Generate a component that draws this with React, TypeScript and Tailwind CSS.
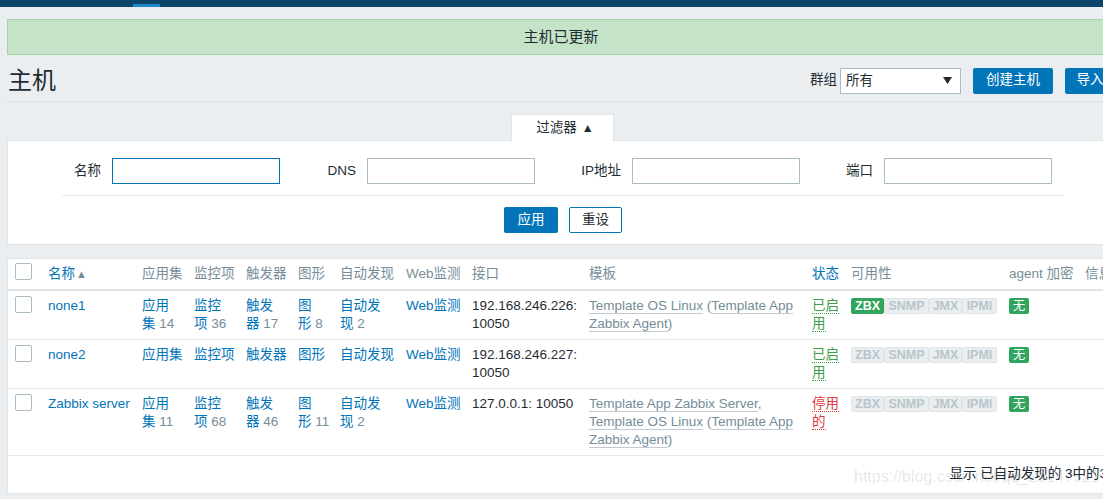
import React from "react";

const FONT = { fontFamily: '"Liberation Sans", Arial, "Noto Sans CJK SC", sans-serif' };

function Checkbox() {
  return <div className="w-[17px] h-[17px] bg-white border border-[#acbbc2] rounded-[2px]" />;
}

function Badge({ label, w, on }: { label: string; w: string; on?: boolean }) {
  return (
    <span
      className={
        "inline-flex items-center justify-center h-[16px] text-[12.5px] leading-none font-bold rounded-[2px] border " +
        w +
        (on
          ? " bg-[#31a55d] border-[#31a55d] text-white"
          : " bg-[#ebeef0] border-[#dfe4e7] text-[#b9c5cb]")
      }
    >
      {label}
    </span>
  );
}

function Avail({ zbx }: { zbx?: boolean }) {
  return (
    <div className="flex mt-[1px]">
      <Badge label="ZBX" w="w-[33px]" on={zbx} />
      <Badge label="SNMP" w="w-[45px]" />
      <Badge label="JMX" w="w-[33px]" />
      <Badge label="IPMI" w="w-[35px]" />
    </div>
  );
}

function None() {
  return (
    <span className="inline-flex items-center justify-center w-[20px] h-[16px] mt-[1px] bg-[#31a55d] text-white text-[12.5px] rounded-[2px] leading-none">
      无
    </span>
  );
}

const L = "text-[#0275b8]";
const G = "text-[#768d99]";
const T = "text-[#768d99] border-b border-[#c1cbd1]";

function Two({ a, b, n }: { a: string; b: string; n?: string }) {
  return (
    <div className="whitespace-nowrap">
      <span className={L}>{a}</span>
      <br />
      <span className={L}>{b}</span>
      {n !== undefined && <span className={G}> {n}</span>}
    </div>
  );
}

const td = "align-top px-[6px] py-[6px] leading-[18px]";
const th = "align-top px-[6px] py-[6px] leading-[18px] font-normal text-left";

export default function App() {
  return (
    <div
      className="w-[1103px] h-[499px] overflow-hidden bg-[#ebeef0] relative text-[13.5px] text-[#1f2c33]"
      style={FONT}
    >
      <div className="h-[7px] bg-[#0a466a] flex items-end pl-[133px]">
        <div className="w-[27px] h-[3px] bg-[#1c87c9]" />
      </div>
      <div className="w-[1122px] px-[7px] pt-[12px]">
        {/* message */}
        <div className="h-[36px] bg-[#c5e3c7] border border-[#a6d4a8] flex items-center justify-center text-[15px] text-[#1f2c33]">
          主机已更新
        </div>
        {/* header */}
        <div className="h-[47px] pt-[5px] border-b border-[#dde2e5] flex items-center justify-between">
          <h1 className="text-[24px] leading-none pl-[1px]">主机</h1>
          <div className="flex items-center">
            <span className="mr-[3px]">群组</span>
            <div className="w-[121px] h-[26px] bg-white border border-[#acbbc2] flex items-center justify-between pl-[5px] pr-[8px]">
              <span className="pt-[1px]">所有</span>
              <svg width="9" height="7" viewBox="0 0 9 7">
                <path d="M0 0 H9 L4.5 7 Z" fill="#1f2c33" />
              </svg>
            </div>
            <button className="ml-[12px] h-[26px] w-[80px] bg-[#0275b8] text-white rounded-[2px]">创建主机</button>
            <button className="ml-[12px] h-[26px] w-[50px] bg-[#0275b8] text-white rounded-[2px]">导入</button>
          </div>
        </div>
        {/* filter tab */}
        <div className="flex justify-center mt-[12px] -mb-[1px] relative">
          <div className="w-[103px] h-[27px] bg-white border border-b-0 border-[#dfe4e7] flex items-center justify-center ml-[2px] pl-[6px]">
            过滤器
            <span className="ml-[5px] text-[12px]">▲</span>
          </div>
        </div>
        {/* filter panel */}
        <div className="bg-white border border-[#dfe4e7] pt-[17px] pb-[11px]">
          <div className="flex items-center h-[26px]">
            <div className="w-[93px] text-right text-[#1f2c33]">名称</div>
            <div className="ml-[11px] w-[168px] h-[26px] border border-[#0275b8]" />
            <div className="w-[76px] text-right">DNS</div>
            <div className="ml-[11px] w-[168px] h-[26px] border border-[#acbbc2]" />
            <div className="w-[86px] text-right">IP地址</div>
            <div className="ml-[11px] w-[168px] h-[26px] border border-[#acbbc2]" />
            <div className="w-[73px] text-right">端口</div>
            <div className="ml-[11px] w-[168px] h-[26px] border border-[#acbbc2]" />
          </div>
          <div className="mt-[11px] ml-[54px] w-[1002px] h-[1px] bg-[#e6e9eb]" />
          <div className="mt-[11px] flex justify-center gap-[11px] pl-[4px]">
            <button className="h-[26px] w-[54px] bg-[#0275b8] text-white rounded-[2px]">应用</button>
            <button className="h-[26px] w-[53px] bg-white border border-[#0275b8] text-[#1f2c33] rounded-[2px]">重设</button>
          </div>
        </div>
        {/* table panel */}
        <div className="mt-[13px] bg-white border border-[#dfe4e7] relative">
          <table className="w-full table-fixed border-collapse">
            <colgroup>
              <col className="w-[34px]" />
              <col className="w-[94px]" />
              <col className="w-[52px]" />
              <col className="w-[52px]" />
              <col className="w-[52px]" />
              <col className="w-[42px]" />
              <col className="w-[66px]" />
              <col className="w-[66px]" />
              <col className="w-[117px]" />
              <col className="w-[223px]" />
              <col className="w-[39px]" />
              <col className="w-[158px]" />
              <col className="w-[76px]" />
              <col />
            </colgroup>
            <thead>
              <tr className="border-b-2 border-[#dfe4e7]">
                <th className="align-top pl-[7px] pt-[4px] pb-[8px]">
                  <Checkbox />
                </th>
                <th className={th + " whitespace-nowrap"}>
                  <span className={L}>名称</span>
                  <span className="text-[#768d99] text-[11px] ml-[1px]">▲</span>
                </th>
                <th className={th + " " + G + " whitespace-nowrap"}>应用集</th>
                <th className={th + " " + G + " whitespace-nowrap"}>监控项</th>
                <th className={th + " " + G + " whitespace-nowrap"}>触发器</th>
                <th className={th + " " + G + " whitespace-nowrap"}>图形</th>
                <th className={th + " " + G + " whitespace-nowrap"}>自动发现</th>
                <th className={th + " " + G + " whitespace-nowrap"}>Web监测</th>
                <th className={th + " " + G}>接口</th>
                <th className={th + " " + G}>模板</th>
                <th className={th + " " + L + " whitespace-nowrap"}>状态</th>
                <th className={th + " " + G}>可用性</th>
                <th className={th + " " + G + " whitespace-nowrap"}>agent 加密</th>
                <th className={th + " " + G + " whitespace-nowrap"}>信息</th>
              </tr>
            </thead>
            <tbody>
              <tr className="border-b border-[#e6e9eb]">
                <td className="align-top pl-[7px] pt-[5px]">
                  <Checkbox />
                </td>
                <td className={td + " " + L}>none1</td>
                <td className={td}><Two a="应用" b="集" n="14" /></td>
                <td className={td}><Two a="监控" b="项" n="36" /></td>
                <td className={td}><Two a="触发" b="器" n="17" /></td>
                <td className={td}><Two a="图" b="形" n="8" /></td>
                <td className={td}><Two a="自动发" b="现" n="2" /></td>
                <td className={td + " " + L + " whitespace-nowrap"}>Web监测</td>
                <td className={td + " whitespace-nowrap"}>192.168.246.226:<br />10050</td>
                <td className={td + " whitespace-nowrap " + G}>
                  <span className={T}>Template OS Linux</span> (<span className={T}>Template App<br />Zabbix Agent</span>)
                </td>
                <td className={td + " whitespace-nowrap"}>
                  <span className="text-[#3d9e47] border-b border-dotted border-[#3d9e47]">已启<br />用</span>
                </td>
                <td className={td}><Avail zbx /></td>
                <td className={td}><None /></td>
                <td className={td}></td>
              </tr>
              <tr className="border-b border-[#e6e9eb]">
                <td className="align-top pl-[7px] pt-[5px]">
                  <Checkbox />
                </td>
                <td className={td + " " + L}>none2</td>
                <td className={td + " " + L + " whitespace-nowrap"}>应用集</td>
                <td className={td + " " + L + " whitespace-nowrap"}>监控项</td>
                <td className={td + " " + L + " whitespace-nowrap"}>触发器</td>
                <td className={td + " " + L + " whitespace-nowrap"}>图形</td>
                <td className={td + " " + L + " whitespace-nowrap"}>自动发现</td>
                <td className={td + " " + L + " whitespace-nowrap"}>Web监测</td>
                <td className={td + " whitespace-nowrap"}>192.168.246.227:<br />10050</td>
                <td className={td}></td>
                <td className={td + " whitespace-nowrap"}>
                  <span className="text-[#3d9e47] border-b border-dotted border-[#3d9e47]">已启<br />用</span>
                </td>
                <td className={td}><Avail /></td>
                <td className={td}><None /></td>
                <td className={td}></td>
              </tr>
              <tr className="border-b border-[#e6e9eb]">
                <td className="align-top pl-[7px] pt-[5px]">
                  <Checkbox />
                </td>
                <td className={td + " " + L + " whitespace-nowrap"}>Zabbix server</td>
                <td className={td}><Two a="应用" b="集" n="11" /></td>
                <td className={td}><Two a="监控" b="项" n="68" /></td>
                <td className={td}><Two a="触发" b="器" n="46" /></td>
                <td className={td}><Two a="图" b="形" n="11" /></td>
                <td className={td}><Two a="自动发" b="现" n="2" /></td>
                <td className={td + " " + L + " whitespace-nowrap"}>Web监测</td>
                <td className={td + " whitespace-nowrap"}>127.0.0.1: 10050</td>
                <td className={td + " whitespace-nowrap " + G}>
                  <span className={T}>Template App Zabbix Server</span>,<br />
                  <span className={T}>Template OS Linux</span> (<span className={T}>Template App<br />Zabbix Agent</span>)
                </td>
                <td className={td + " whitespace-nowrap"}>
                  <span className="text-[#e0383a] border-b border-dotted border-[#e0383a]">停用<br />的</span>
                </td>
                <td className={td}><Avail /></td>
                <td className={td}><None /></td>
                <td className={td}></td>
              </tr>
            </tbody>
          </table>
          <div className="h-[37px] flex items-center justify-end pr-[7px] whitespace-nowrap">
            显示 已自动发现的 3中的3
          </div>
          <div className="absolute left-[846px] top-[206px] text-[16px] text-[#0000001c] whitespace-nowrap pointer-events-none">
            https://blog.csdn.net/qq_25147521
          </div>
        </div>
      </div>
    </div>
  );
}
